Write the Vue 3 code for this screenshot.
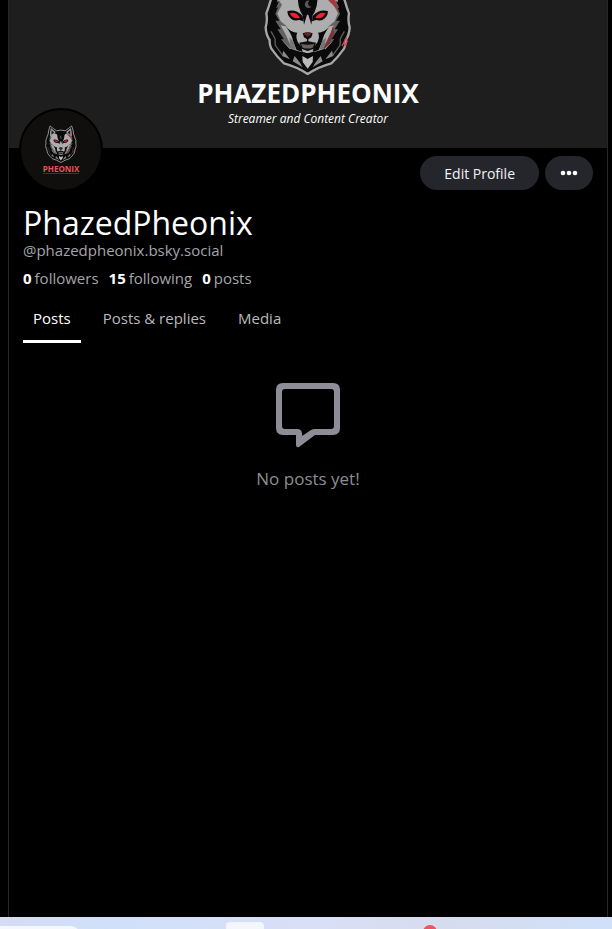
<script setup>
import { ref } from 'vue'

const stats = [
  { count: 0, label: 'followers' },
  { count: 15, label: 'following' },
  { count: 0, label: 'posts' },
]
const tabs = ['Posts', 'Posts & replies', 'Media']
const active = ref('Posts')
</script>

<template>
  <div class="page">
    <svg class="defs" aria-hidden="true">
      <symbol id="wolf" viewBox="0 0 264 312">
        <g transform="translate(-42 87)">
          <!-- head silhouette -->
          <path d="M84 -80 C98 -66 122 -52 138 -40 Q173 -52 208 -40 C224 -52 248 -66 262 -80 Q276 -44 278 -12 L285 4 Q290 22 297 40 Q293 62 299 82 Q298 104 287 120 Q288 134 282 146 Q264 172 244 190 Q206 200 173 222 Q140 200 102 190 Q82 172 64 146 Q58 134 59 120 Q48 104 47 82 Q53 62 49 40 Q56 22 61 4 L68 -12 Q70 -44 84 -80Z" fill="#0a0a0b" stroke="#a6a6a7" stroke-width="7" stroke-linejoin="round" />
          <!-- ears -->
          <path d="M90 -64 L130 -30 L112 -6 L82 6 Q82 -32 90 -64Z M256 -64 L216 -30 L234 -6 L264 6 Q264 -32 256 -64Z" fill="#9c9c9d" />
          <path d="M96 -44 L117 -25 L96 -8Z M250 -44 L229 -25 L250 -8Z" fill="#171718" />
          <!-- face -->
          <path d="M88 4 Q104 -16 128 -18 L150 -4 L158 28 L166 46 L173 40 L180 46 L188 28 L196 -4 L218 -18 Q242 -16 258 4 Q266 22 275 44 L268 74 Q262 104 244 128 L226 148 L205 155 L173 160 L141 155 L120 148 L102 128 Q84 104 78 74 L71 44 Q80 22 88 4Z" fill="#adadae" />
          <!-- side shading -->
          <path d="M88 4 L96 14 L82 40 L92 64 L112 80 L92 76 L108 106 L120 132 L126 150 L100 126 Q82 100 76 70 L71 44Z M258 4 L250 14 L264 40 L254 64 L234 80 L254 76 L238 106 L226 132 L220 150 L246 126 Q264 100 270 70 L275 44Z" fill="#626263" />
          <!-- fur edge cuts -->
          <path d="M64 30 L84 22 L76 42 L88 62 L76 62 L92 88 L82 88 L102 118 L90 116 L104 140 L86 128 L66 90Z M282 30 L262 22 L270 42 L258 62 L270 62 L254 88 L264 88 L244 118 L256 116 L242 140 L260 128 L280 90Z" fill="#0a0a0b" />
          <!-- forehead stripe -->
          <path d="M142 -14 L156 -18 H190 L204 -14 L200 18 L194 36 L188 46 L184 74 L175 44 H171 L162 74 L158 46 L152 36 L146 18Z" fill="#0a0a0b" />
          <path d="M178 2 A11 11 0 1 0 184 20 A10 10 0 0 1 178 2Z" fill="#59595a" />
          <!-- eyes -->
          <path d="M112 34 Q136 26 158 48 L160 64 L148 60 Q124 66 114 44Z M234 34 Q210 26 188 48 L186 64 L198 60 Q222 66 232 44Z" fill="#0a0a0b" />
          <path d="M119 40 Q138 34 150 53 Q130 60 119 40Z M227 40 Q208 34 196 53 Q216 60 227 40Z" fill="#f0202d" />
          <!-- muzzle -->
          <path d="M108 80 Q122 96 142 98 Q136 108 143 126 L154 140 L158 156 L140 150 L130 126 Q126 102 108 80Z M238 80 Q224 96 204 98 Q210 108 203 126 L192 140 L188 156 L206 150 L216 126 Q220 102 238 80Z" fill="#0a0a0b" />
          <path d="M118 112 L130 124 L138 150 L122 144Z M228 112 L216 124 L208 150 L224 144Z" fill="#757576" />
          <path d="M158 100 Q173 93 188 100 L184 112 L173 119 L162 112Z" fill="#120d0d" />
          <path d="M161 101 Q173 95 185 101 L173 110Z" fill="#6f2326" />
          <path d="M171 116 H175 V124 L198 128 L192 146 L173 153 L154 146 L148 128 L171 124Z" fill="#0e0e0f" />
          <path d="M153 132 Q173 136 193 132 L188 143 Q173 148 158 143Z" fill="#6d6061" />
          <!-- chest -->
          <path d="M122 146 L145 154 L173 160 L201 154 L224 146 L238 176 L206 186 L173 206 L140 186 L108 176Z" fill="#0a0a0b" />
          <path d="M157 168 L173 177 L189 168 L188 186 L173 206 L158 186Z" fill="#bababb" />
          <path d="M134 168 L150 188 L158 202 L128 184Z M212 168 L196 188 L188 202 L218 184Z M100 152 L120 178 L96 168Z M246 152 L226 178 L250 168Z" fill="#8b8b8c" />
          <path d="M63 94 L75 116 L76 136 L98 166 M283 94 L271 116 L270 136 L248 166" fill="none" stroke="#5c5c5d" stroke-width="4" />
          <!-- red rim light -->
          <path d="M222 -18 Q250 -12 258 6 L266 32 L252 18 L236 2Z" fill="#a63a41" />
          <path d="M250 74 L240 106 L222 142 L218 150 L238 132 L252 102Z" fill="#7b3439" />
          <path d="M276 138 L290 112 M284 138 L293 122" stroke="#dc3e49" stroke-width="4" />
        </g>
      </symbol>
    </svg>

    <main class="column">
      <header class="banner">
        <svg class="banner-logo" aria-hidden="true"><use href="#wolf" /></svg>
        <div class="brand">PHAZEDPHEONIX</div>
        <div class="tagline">Streamer and Content Creator</div>
      </header>

      <section class="profile">
        <div class="top-row">
          <div class="avatar">
            <svg class="avatar-logo" aria-hidden="true"><use href="#wolf" /></svg>
            <span class="avatar-name">PHEONIX</span>
          </div>
          <div class="actions">
            <button type="button" class="pill edit">Edit Profile</button>
            <button type="button" class="pill more" aria-label="More options">
              <svg width="18" height="6" viewBox="0 0 18 6" fill="#fff">
                <circle cx="3" cy="3" r="2.3" />
                <circle cx="9" cy="3" r="2.3" />
                <circle cx="15" cy="3" r="2.3" />
              </svg>
            </button>
          </div>
        </div>

        <h1>PhazedPheonix</h1>
        <div class="handle">@phazedpheonix.bsky.social</div>
        <div class="stats">
          <a v-for="s in stats" :key="s.label" href="#"><b>{{ s.count }}</b><span>{{ s.label }}</span></a>
        </div>
      </section>

      <nav class="tabs">
        <button
          v-for="t in tabs"
          :key="t"
          type="button"
          :class="{ active: active === t }"
          @click="active = t"
        >{{ t }}</button>
      </nav>

      <section class="empty">
        <svg width="66" height="66" viewBox="0 0 66 66" aria-hidden="true">
          <path fill="#8d8d97" fill-rule="evenodd" d="M8 0 H58 Q65 0 65 7 V45 Q65 52 58 52 H40 L24 64 Q21 65 21 62 V52 H8 Q1 52 1 45 V7 Q1 0 8 0Z M10 6 Q7 6 7 9 V43 Q7 46 10 46 H22 Q27 46 27 51 V53 L36 47 Q38 46 40 46 H56 Q59 46 59 43 V9 Q59 6 56 6Z" />
        </svg>
        <p>No posts yet!</p>
      </section>
    </main>

    <footer class="taskbar">
      <div class="search"></div>
      <div class="tile"></div>
      <div class="badge"></div>
    </footer>
  </div>
</template>

<style>
body {
  background: #000;
}
</style>

<style scoped>
.page {
  display: flex;
  flex-direction: column;
  min-height: 100vh;
  background: #000;
  color: #fff;
  font-family: "Open Sans", "Noto Sans", sans-serif;
}
.defs {
  position: absolute;
  width: 0;
  height: 0;
}
.column {
  flex: 1;
  margin: 0 4px 0 8px;
  border: solid #26272b;
  border-width: 0 1px;
}
.banner {
  display: flex;
  flex-direction: column;
  align-items: center;
  height: 148px;
  overflow: hidden;
  background: #1e1e1e;
}
.banner-logo {
  flex: none;
  width: 88px;
  height: 104px;
  margin-top: -29px;
}
.brand {
  font-size: 26px;
  font-weight: 700;
  line-height: 36px;
}
.tagline {
  font-size: 12px;
  font-style: italic;
  line-height: 16px;
}
.profile {
  padding: 0 14px;
}
.top-row {
  display: flex;
  justify-content: space-between;
  height: 58px;
}
.avatar {
  box-sizing: border-box;
  display: flex;
  flex-direction: column;
  align-items: center;
  width: 84px;
  height: 84px;
  margin: -40px 0 0 -4px;
  padding-top: 15px;
  border: 2px solid #000;
  border-radius: 50%;
  background: #110f0e;
}
.avatar-logo {
  width: 32px;
  height: 38px;
}
.avatar-name {
  margin-top: 1px;
  border-bottom: 1px solid #6b1f22;
  color: #ee4f52;
  font-size: 8px;
  font-weight: 700;
  line-height: 9px;
}
.actions {
  display: flex;
  gap: 6px;
  padding-top: 8px;
}
.pill {
  display: flex;
  align-items: center;
  justify-content: center;
  height: 34px;
  padding: 0 24px;
  border: 0;
  border-radius: 17px;
  background: #25262c;
  color: #f3f3f5;
  font-family: inherit;
  font-size: 14px;
}
.more {
  padding: 0 15px;
}
h1 {
  margin: 0;
  font-size: 32px;
  font-weight: 400;
  line-height: 34px;
}
.handle {
  color: #a5a5ab;
  font-size: 15px;
  line-height: 20px;
}
.stats {
  display: flex;
  gap: 10px;
  margin-top: 8px;
  font-size: 15px;
  line-height: 20px;
}
.stats a {
  display: flex;
  gap: 3px;
  color: #a5a5ab;
  text-decoration: none;
}
.stats b {
  color: #fff;
}
.tabs {
  display: flex;
  gap: 12px;
  margin-top: 15px;
  padding: 0 14px;
}
.tabs button {
  height: 40px;
  padding: 0 10px 8px;
  border: 0;
  border-bottom: 3px solid transparent;
  background: none;
  color: #b9b9bf;
  font-family: inherit;
  font-size: 15px;
  line-height: 20px;
}
.tabs .active {
  border-color: #fff;
  color: #fff;
}
.empty {
  display: flex;
  flex-direction: column;
  align-items: center;
  padding-top: 40px;
}
.empty p {
  margin: 18px 0 0;
  color: #8d8d93;
  font-size: 17px;
  line-height: 24px;
}
.taskbar {
  display: flex;
  align-items: flex-start;
  height: 12px;
  overflow: hidden;
  background: linear-gradient(90deg, #d5dcf3, #d0e0fa 18%, #d9dff7 52%, #d7dcee 70%, #cfe0f9);
}
.search {
  width: 82px;
  height: 24px;
  margin-top: 9px;
  border-radius: 0 14px 14px 0;
  background: #f4f7fd;
}
.tile {
  width: 38px;
  height: 24px;
  margin: 5px 0 0 144px;
  border-radius: 4px;
  background: #f3f6fd;
}
.badge {
  width: 14px;
  height: 14px;
  margin: 8px 0 0 159px;
  border-radius: 50%;
  background: #ee5560;
}
</style>
